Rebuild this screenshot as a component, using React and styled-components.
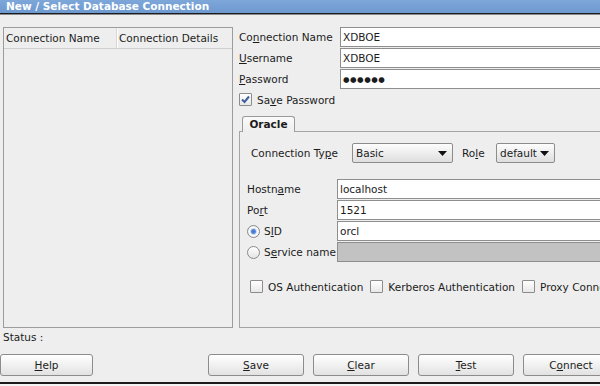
import React from 'react';
import styled, { createGlobalStyle } from 'styled-components';

const GlobalStyle = createGlobalStyle`
  html, body {
    margin: 0;
    padding: 0;
    overflow: hidden;
    background: #eeeeee;
  }
  body {
    font-family: "DejaVu Sans", Verdana, sans-serif;
    font-size: 10.5px;
    color: #1c1c1c;
  }
`;

const Mn = styled.span`
  text-decoration: underline;
  text-underline-offset: 1px;
`;

const Check = () => (
  <svg width="11" height="11" viewBox="0 0 11 11">
    <path d="M2 5.5 L4.5 8 L9 2.5" fill="none" stroke="#3e5f9e" strokeWidth="2" />
  </svg>
);

const Caret = () => (
  <svg width="9" height="5" viewBox="0 0 9 5">
    <polygon points="0,0 9,0 4.5,5" fill="#111" />
  </svg>
);

const App = () => {
  return (
    <Window>
      <GlobalStyle />
      <TitleBar>New / Select Database Connection</TitleBar>
      <Content>
        <Main>
          <ConnList>
            <ListHeader>
              <HeaderCell width={113}>Connection Name</HeaderCell>
              <HeaderCell>Connection Details</HeaderCell>
            </ListHeader>
          </ConnList>

          <FormColumn>
            <TopForm>
              <Label>Co<Mn>n</Mn>nection Name</Label>
              <Field>XDBOE</Field>
              <Label><Mn>U</Mn>sername</Label>
              <Field>XDBOE</Field>
              <Label><Mn>P</Mn>assword</Label>
              <Field><Dots>●●●●●●</Dots></Field>
            </TopForm>

            <SaveRow>
              <CheckBox checked><Check /></CheckBox>
              <span>Sa<Mn>v</Mn>e Password</span>
            </SaveRow>

            <TabStrip>
              <Tab>Oracle</Tab>
            </TabStrip>
            <TabPanel>
              <TypeRow>
                <TypeLabel>Connection Ty<Mn>p</Mn>e</TypeLabel>
                <Combo width={101}>
                  <span>Basic</span>
                  <Caret />
                </Combo>
                <RoleLabel>Ro<Mn>l</Mn>e</RoleLabel>
                <Combo width={59}>
                  <span>default</span>
                  <Caret />
                </Combo>
              </TypeRow>

              <DetailsGrid>
                <Label>Hostn<Mn>a</Mn>me</Label>
                <Field>localhost</Field>
                <Label>Po<Mn>r</Mn>t</Label>
                <Field>1521</Field>
                <RadioLabel>
                  <Radio selected />
                  <span>S<Mn>I</Mn>D</span>
                </RadioLabel>
                <Field>orcl</Field>
                <RadioLabel>
                  <Radio />
                  <span>S<Mn>e</Mn>rvice name</span>
                </RadioLabel>
                <Field disabled />
              </DetailsGrid>

              <AuthRow>
                <AuthItem>
                  <CheckBox />
                  <span>OS Authentication</span>
                </AuthItem>
                <AuthItem>
                  <CheckBox />
                  <span>Kerberos Authentication</span>
                </AuthItem>
                <AuthItem>
                  <CheckBox />
                  <span>Proxy Connection</span>
                </AuthItem>
              </AuthRow>
            </TabPanel>
          </FormColumn>
        </Main>

        <Status>Status :</Status>

        <ButtonBar>
          <Button width={93}><Mn>H</Mn>elp</Button>
          <Spacer />
          <Button><Mn>S</Mn>ave</Button>
          <Button><Mn>C</Mn>lear</Button>
          <Button><Mn>T</Mn>est</Button>
          <Button>C<Mn>o</Mn>nnect</Button>
        </ButtonBar>
      </Content>
      <BottomEdge />
    </Window>
  );
};

const Window = styled.div`
  width: 680px;
  height: 386px;
  display: flex;
  flex-direction: column;
  overflow: hidden;
`;

const TitleBar = styled.div`
  height: 13px;
  line-height: 13px;
  padding-left: 6px;
  background: linear-gradient(#7ea7d9, #6d99d0);
  color: #ffffff;
  font-weight: bold;
  font-size: 10.5px;
  border-bottom: 1px solid #1c1c1c;
  box-shadow: 0 1px 0 #8a8a8a;
`;

const Content = styled.div`
  padding: 13px 0 0 3px;
  display: flex;
  flex-direction: column;
`;

const Main = styled.div`
  display: flex;
  gap: 6px;
  height: 301px;
`;

const ConnList = styled.div`
  width: 230px;
  flex: none;
  box-sizing: border-box;
  border: 1px solid #9c9c9c;
  background: #eeeeee;
`;

const ListHeader = styled.div`
  display: flex;
  height: 20px;
  border-bottom: 1px solid #cfcfcf;
`;

const HeaderCell = styled.div`
  width: ${p => (p.width ? `${p.width}px` : 'auto')};
  flex: ${p => (p.width ? 'none' : '1')};
  box-sizing: border-box;
  padding-left: 2px;
  line-height: 20px;
  white-space: nowrap;
  border-right: ${p => (p.width ? '1px solid #d6d6d6' : 'none')};
  box-shadow: ${p => (p.width ? '1px 0 0 #ffffff' : 'none')};
`;

const FormColumn = styled.div`
  flex: 1;
  display: flex;
  flex-direction: column;
`;

const TopForm = styled.div`
  display: grid;
  grid-template-columns: 101px 1fr;
  grid-auto-rows: 20px;
  row-gap: 1px;
`;

const Label = styled.div`
  display: flex;
  align-items: center;
  white-space: nowrap;
`;

const Field = styled.div`
  box-sizing: border-box;
  height: 20px;
  border: 1px solid #8e8e8e;
  background: ${p => (p.disabled ? '#c2c2c2' : '#ffffff')};
  padding-left: 2px;
  line-height: 18px;
  white-space: nowrap;
`;

const Dots = styled.span`
  font-size: 7.5px;
  letter-spacing: 0.5px;
  position: relative;
  top: -1px;
`;

const SaveRow = styled.div`
  margin-top: 4px;
  height: 13px;
  display: flex;
  align-items: center;
  gap: 5px;
  white-space: nowrap;
`;

const CheckBox = styled.div`
  width: 13px;
  height: 13px;
  box-sizing: border-box;
  flex: none;
  border: 1px solid #8c8c8c;
  border-radius: 1px;
  background: linear-gradient(#ffffff, #e8e8e8);
  display: flex;
  align-items: center;
  justify-content: center;
`;

const TabStrip = styled.div`
  margin-top: 10px;
  display: flex;
  padding-left: 3px;
  position: relative;
  z-index: 1;
  margin-bottom: -1px;
`;

const Tab = styled.div`
  width: 53px;
  height: 16px;
  box-sizing: border-box;
  border: 1px solid #9a9a9a;
  border-bottom: none;
  border-radius: 3px 3px 0 0;
  background: linear-gradient(#fafafa, #eeeeee);
  font-weight: bold;
  text-align: center;
  line-height: 14px;
`;

const TabPanel = styled.div`
  height: 198px;
  box-sizing: border-box;
  border: 1px solid #a4a4a4;
  padding: 11px 0 0 7px;
`;

const TypeRow = styled.div`
  display: flex;
  align-items: center;
  height: 20px;
  margin-left: 4px;
`;

const TypeLabel = styled.div`
  width: 101px;
  flex: none;
  white-space: nowrap;
`;

const RoleLabel = styled.div`
  width: 34px;
  margin-left: 9px;
  flex: none;
`;

const Combo = styled.div`
  width: ${p => p.width}px;
  height: 20px;
  box-sizing: border-box;
  flex: none;
  border: 1px solid #8c8c8c;
  border-radius: 2px;
  background: linear-gradient(#fdfdfd, #dedede);
  display: flex;
  align-items: center;
  justify-content: space-between;
  padding: 0 5px 0 3px;
`;

const DetailsGrid = styled.div`
  margin-top: 16px;
  display: grid;
  grid-template-columns: 90px 1fr;
  grid-auto-rows: 20px;
  row-gap: 1px;
`;

const RadioLabel = styled.div`
  display: flex;
  align-items: center;
  gap: 4px;
  white-space: nowrap;
`;

const Radio = styled.div`
  width: 13px;
  height: 13px;
  box-sizing: border-box;
  flex: none;
  border: 1px solid #8a8a8a;
  border-radius: 50%;
  background: ${p =>
    p.selected
      ? 'radial-gradient(circle, #3f72c9 0, #5a8ad8 2px, #c8d8f0 3px, #ffffff 4px, #e6e6e6 6px)'
      : 'linear-gradient(#ffffff, #e4e4e4)'};
`;

const AuthRow = styled.div`
  margin-top: 18px;
  margin-left: 3px;
  height: 13px;
  display: flex;
  align-items: center;
  gap: 7px;
  white-space: nowrap;
`;

const AuthItem = styled.div`
  display: flex;
  align-items: center;
  gap: 5px;
`;

const Status = styled.div`
  height: 19px;
  line-height: 19px;
`;

const ButtonBar = styled.div`
  margin: 7px 0 0 -3px;
  display: flex;
  gap: 9px;
  height: 22px;
`;

const Spacer = styled.div`
  width: 97px;
  flex: none;
`;

const Button = styled.div`
  width: ${p => p.width || 96}px;
  height: 22px;
  box-sizing: border-box;
  flex: none;
  border: 1px solid #8c8c8c;
  border-radius: 3px;
  background: linear-gradient(#ffffff, #e2e2e2);
  text-align: center;
  line-height: 20px;
`;

const BottomEdge = styled.div`
  margin-top: 6px;
  border-top: 2px solid #1c1c1c;
  flex: 1;
  background: #f4f4f4;
`;

export default App;
